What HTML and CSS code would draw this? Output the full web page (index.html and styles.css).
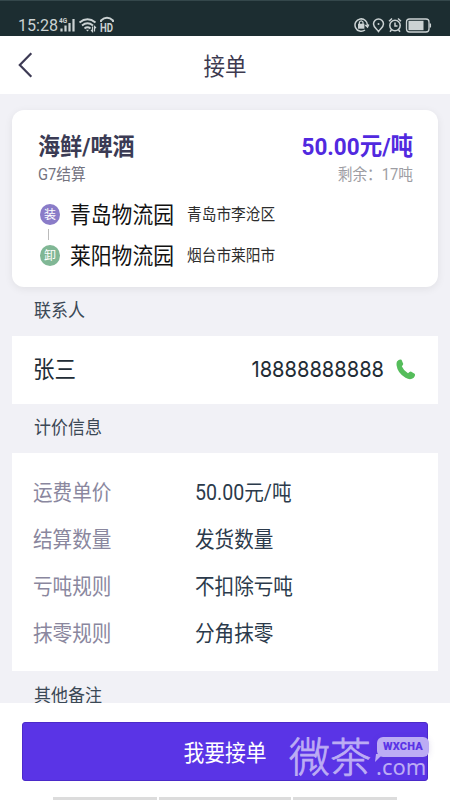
FILE: index.html
```html
<!DOCTYPE html>
<html lang="zh-CN">
<head>
<meta charset="utf-8">
<title>接单</title>
<link rel="stylesheet" href="styles.css">
</head>
<body>
<div class="status">
  <span class="time t">15:28</span>
  <svg class="left-icons" width="56" height="18" viewBox="0 0 56 18" fill="none" stroke="#cbd2d3">
    <text x="0" y="7" class="tiny">4G</text>
    <path d="M2.500 12.500v3M6.500 9.500v6M10.500 7v8.500M14.500 3v12.500" stroke-width="2.200"/>
    <path d="M20.500 6.500q8-6.500 16 0M23 9.500q5.500-4.500 11 0M25.500 12.500q3-2.400 6 0" stroke-width="1.900"/>
    <path d="M27 13.800h3l-1.500 1.800z" fill="#cbd2d3" stroke="none"/>
    <path d="M33.500 10.500v5l-1.500-1.500M35.500 15.500v-5l1.500 1.500" stroke-width="1.200"/>
    <path d="M42 6V4.500q6-5.500 12 0V6" stroke-width="1.900"/>
    <text x="41" y="16" class="hd" textLength="13" lengthAdjust="spacingAndGlyphs">HD</text>
  </svg>
  <svg class="right-icons" width="80" height="18" viewBox="0 0 80 18" fill="none" stroke="#cbd2d3" stroke-width="1.500">
    <path d="M11 14A6.200 6.200 0 1 1 13.400 9.500M11.300 9l2.200 2 1.300-2.500"/>
    <rect x="4" y="7.700" width="6.400" height="5" fill="#cbd2d3" stroke="none"/>
    <path d="M5.400 8V6.200q1.800-2.600 3.600 0V8" stroke-width="1.200"/>
    <path d="M24.500 15.500c-2-2.800-5-4.500-5-7.500a5 5 0 0 1 10 0c0 3-3 4.700-5 7.500z"/>
    <circle cx="24.500" cy="8" r="1" fill="#cbd2d3" stroke="none"/>
    <circle cx="41" cy="9.500" r="5.200"/>
    <path d="M41 6.500v3.500h2.500M35 5.200l3-2.700M47 5.200l-3-2.700M37.500 13.700l-1.500 2M44.500 13.700l1.500 2"/>
    <rect x="52.500" y="3" width="22.500" height="13" rx="3" stroke-width="1.300"/>
    <path d="M54.500 4.800h15v9.400h-15z" fill="#cbd2d3" stroke="none"/>
    <path d="M76.300 7.500v4" stroke-width="1.500"/>
  </svg>
</div>
<header class="header">
  <svg class="back" width="15" height="26" viewBox="0 0 15 26" fill="none" stroke="#3d3a54" stroke-width="2.200"><path d="M13.300 1.200 1.800 13l11.500 11.800"/></svg>
  <h1 class="title t">接单</h1>
</header>
<main class="main">
  <section class="card order">
    <div class="row goods"><span class="t">海鲜/啤酒</span><span class="price t">50.00元/吨</span></div>
    <div class="row settle"><span class="t">G7结算</span><span class="left t">剩余：17吨</span></div>
    <div class="stop first"><span class="badge load">装</span><span class="place t">青岛物流园</span><span class="city t">青岛市李沧区</span></div>
    <div class="link"></div>
    <div class="stop"><span class="badge unload">卸</span><span class="place t">莱阳物流园</span><span class="city t">烟台市莱阳市</span></div>
  </section>
  <h2 class="label l1 t">联系人</h2>
  <section class="card contact">
    <span class="name t">张三</span>
    <span class="tel t">18888888888</span>
    <svg class="phone" width="20" height="21" viewBox="0 0 20 21"><path d="M1 2.500Q3.500-.5 5.500.8L7.200 4.700Q7.500 6 5.800 7.200Q7.500 11.500 12 14.200Q14 12.200 15.300 12.700L18.600 14.700Q19.800 16.200 17.700 18.700Q14.500 21.600 9.500 18.800Q1.500 14 .6 6.500Q.3 4 1 2.500Z" fill="#55bd5b"/></svg>
  </section>
  <h2 class="label l2 t">计价信息</h2>
  <section class="card info">
    <div class="item"><span class="key t">运费单价</span><span class="t">50.00元/吨</span></div>
    <div class="item"><span class="key t">结算数量</span><span class="t">发货数量</span></div>
    <div class="item"><span class="key t">亏吨规则</span><span class="t">不扣除亏吨</span></div>
    <div class="item"><span class="key t">抹零规则</span><span class="t">分角抹零</span></div>
  </section>
  <h2 class="label l3 t">其他备注</h2>
</main>
<footer class="footer">
  <button class="submit"><span class="t">我要接单</span></button>
  <div class="nav"><i></i><i class="mid"></i><i></i></div>
  <div class="watermark">
    <span class="wm-name">微茶</span>
    <span class="wm-side"><span class="bubble"><svg class="tail" width="9" height="9" viewBox="0 0 9 9"><path d="M1 0h7L0 8z" fill="#bcacf4"/></svg>WXCHA</span><span class="dotcom">.com</span></span>
  </div>
</footer>
</body>
</html>
```

FILE: styles.css
```css
* { box-sizing: border-box; }
body {
  margin: 0;
  width: 450px;
  height: 800px;
  overflow: hidden;
  display: flex;
  flex-direction: column;
  background: #fff;
  font-family: Roboto, "Noto Sans CJK SC", sans-serif;
  color: #2b3a4b;
}
h1, h2 { margin: 0; font-weight: 400; }
.t { display: block; white-space: nowrap; transform: scaleY(1.09); }
.status {
  height: 36px;
  flex: none;
  display: flex;
  align-items: center;
  padding: 14px 16px 0 18px;
  background: #1c2d31;
  border-top: 1px solid #34474b;
  color: #cbd2d3;
}
.time { font-size: 16.1px; line-height: 20px; width: 41px; transform: none; }
.left-icons { margin-top: -2px; }
.right-icons { margin: -1px 0 0 auto; width: 80px; }
.tiny { font: bold 6.500px Roboto, sans-serif; fill: #cbd2d3; stroke: none; }
.hd { font: bold 12px Roboto, sans-serif; fill: #cbd2d3; stroke: none; }
.header {
  height: 58px;
  flex: none;
  display: grid;
  grid-template-columns: 18px 1fr 18px;
  align-items: center;
  padding: 0 18px;
}
.title { text-align: center; font-size: 21.5px; line-height: 30px; color: #3d3a50; padding-top: 3px; }
.main { height: 609px; flex: none; overflow: hidden; padding: 16px 12px 0; background: #f1f1f6; }
.card { background: #fff; }
.order { height: 177px; border-radius: 12px; padding: 21px 25px 0 26px; box-shadow: 0 2px 9px rgba(0, 0, 0, .07); }
.row { display: flex; justify-content: space-between; }
.goods { font-size: 22.1px; line-height: 30px; font-weight: 700; color: #3b3b54; }
.goods .price { font-size: 22.5px; color: #5129df; }
.settle { font-size: 14.7px; line-height: 20px; margin-top: 4px; color: #73737f; }
.left { color: #9d9da3; }
.stop { display: flex; align-items: center; height: 30px; }
.first { margin-top: 14px; }
.badge {
  width: 20px;
  height: 21px;
  margin-left: 2px;
  border-radius: 50%;
  font-size: 12px;
  line-height: 22px;
  text-align: center;
  color: #fff;
}
.load { background: #8a7cc8; }
.unload { background: #80b795; }
.place { width: 117px; margin-left: 10px; padding-top: 2px; font-size: 20.8px; line-height: 30px; color: #111; }
.city { padding-top: 1px; font-size: 14.7px; line-height: 24px; color: #2d2d2d; }
.link { width: 1px; height: 11px; margin-left: 10px; background: #bbb; }
.label { width: 200px; margin-left: 22px; font-size: 17px; line-height: 24px; color: #3b4855; }
.l1 { margin-top: 11px; }
.contact { height: 68px; margin-top: 14px; display: flex; align-items: center; padding: 0 22px 0 21px; }
.name { font-size: 21.5px; line-height: 30px; color: #222c35; }
.tel { margin: -2px 12px 0 auto; font-family: Inter, sans-serif; font-size: 20.1px; line-height: 28px; color: #222c35; }
.phone { margin-top: -2px; }
.l2 { margin-top: 11px; }
.info { height: 218px; margin-top: 14px; padding: 17px 21px 0; }
.item { display: grid; grid-template-columns: 162px 1fr; height: 46.8px; align-items: center; font-size: 19.6px; line-height: 30px; }
.key { color: #8a879e; }
.l3 { margin-top: 12px; }
.footer { position: relative; height: 97px; flex: none; padding: 19px 22px 0; background: #fff; }
.submit {
  display: flex;
  width: 406px;
  height: 59px;
  justify-content: center;
  align-items: center;
  border: 1px solid #4b2ac9;
  border-radius: 3px;
  padding: 2px 0 0;
  background: #5a34e6;
  color: #fff;
  font: 20.8px/30px Roboto, "Noto Sans CJK SC", sans-serif;
}
.nav { display: flex; gap: 2px; margin: 16px 0 0 31px; }
.nav i { width: 104px; height: 3px; background: #dcdcdc; }
.nav .mid { width: 132px; }
.watermark { position: absolute; left: 289px; top: 30px; display: flex; color: #bcacf4; }
.wm-name { width: 87px; padding-top: 1px; font: 300 41px/40px "Noto Sans CJK SC", sans-serif; -webkit-text-stroke: .8px #bcacf4; }
.wm-side { display: flex; flex-direction: column; }
.bubble {
  position: relative;
  margin: 4px 0 0 1px;
  width: 52px;
  height: 20px;
  border-radius: 6px;
  background: #bcacf4;
  box-shadow: 0 1px 6px rgba(80, 60, 150, .15);
  color: #5a34e6;
  font: 900 11px/20px Roboto, sans-serif;
  letter-spacing: .2px;
  text-align: center;
}
.tail { position: absolute; left: -2px; top: 17px; }
.dotcom { font: 22px/18px "Noto Sans", sans-serif; }
```
